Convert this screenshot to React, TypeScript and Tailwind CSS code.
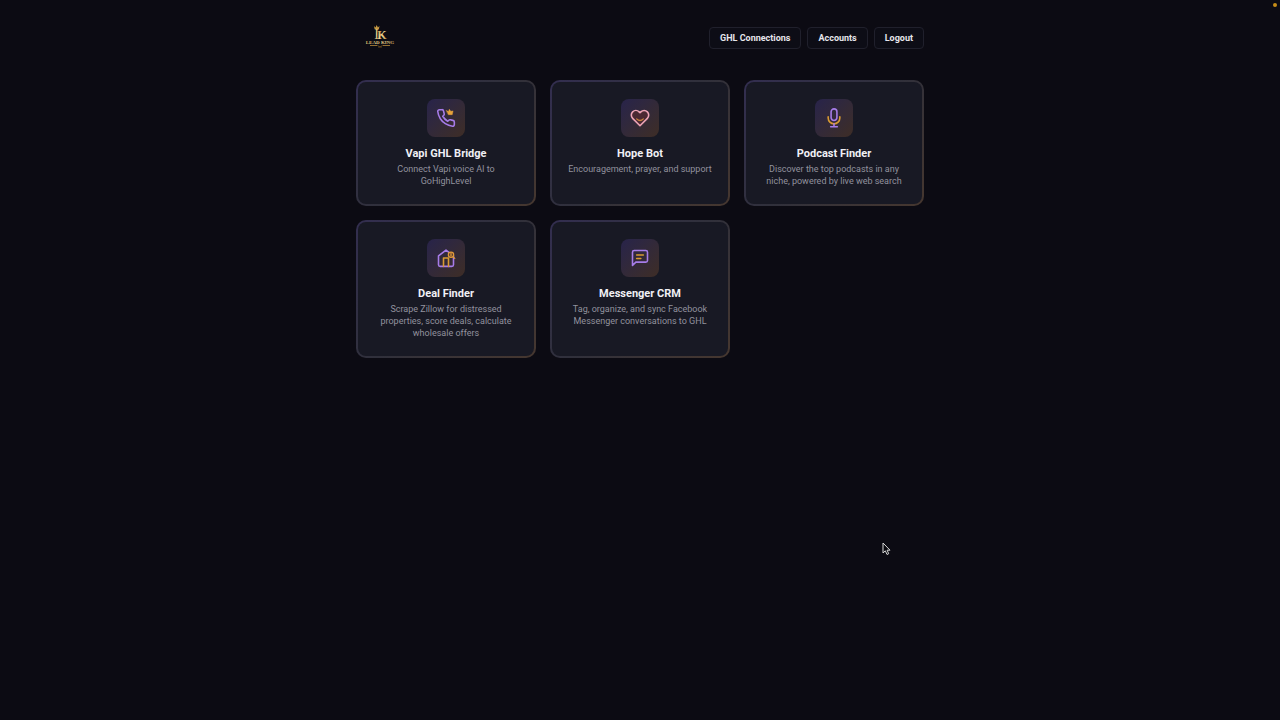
import type { ReactNode } from "react";

type Tool = { title: string; description: string; icon: ReactNode };

function Glyph({ children }: { children: ReactNode }) {
  return (
    <svg
      viewBox="0 0 24 24"
      className="size-5"
      fill="none"
      stroke="#a67ce8"
      strokeWidth="1.9"
      strokeLinecap="round"
      strokeLinejoin="round"
      aria-hidden="true"
    >
      {children}
    </svg>
  );
}

const tools: Tool[] = [
  {
    title: "Vapi GHL Bridge",
    description: "Connect Vapi voice AI to GoHighLevel",
    icon: (
      <Glyph>
        <path d="M22 16.92v3a2 2 0 0 1-2.18 2 19.79 19.79 0 0 1-8.63-3.07 19.5 19.5 0 0 1-6-6 19.79 19.79 0 0 1-3.07-8.67A2 2 0 0 1 4.11 2h3a2 2 0 0 1 2 1.72 12.84 12.84 0 0 0 .7 2.81 2 2 0 0 1-.45 2.11L8.09 9.91a16 16 0 0 0 6 6l1.27-1.27a2 2 0 0 1 2.11-.45 12.84 12.84 0 0 0 2.81.7A2 2 0 0 1 22 16.92z" />
        <path d="M12.5 3l2.500 1.200L16 1.500l1.800 2.500L20.500 3.500l-1 4.500h-4.500z" fill="#e8a33a" stroke="#e8a33a" strokeWidth="0.5" />
      </Glyph>
    ),
  },
  {
    title: "Hope Bot",
    description: "Encouragement, prayer, and support",
    icon: (
      <Glyph>
        <path
          d="M20.84 4.61a5.5 5.5 0 0 0-7.78 0L12 5.67l-1.06-1.06a5.5 5.5 0 0 0-7.78 7.78L12 21.23l8.84-8.84a5.5 5.5 0 0 0 0-7.78z"
          stroke="#eda3b5"
          fill="#4b2933"
        />
        <path d="M8 13q4 4 8 0" stroke="#c9833f" strokeWidth="1.5" />
      </Glyph>
    ),
  },
  {
    title: "Podcast Finder",
    description: "Discover the top podcasts in any niche, powered by live web search",
    icon: (
      <Glyph>
        <rect x="8.5" y="1" width="7" height="14" rx="3.5" />
        <path d="M5 10.500v1.500a7 7 0 0 0 14 0v-1.500" stroke="#d99a32" />
        <path d="M12 19v3.500M8 22.500h8" />
      </Glyph>
    ),
  },
  {
    title: "Deal Finder",
    description: "Scrape Zillow for distressed properties, score deals, calculate wholesale offers",
    icon: (
      <Glyph>
        <path d="M3 9.500L12 2.500l9 7V20a2 2 0 0 1-2 2H5a2 2 0 0 1-2-2z" />
        <path d="M9 22V12h6v10" stroke="#d99a32" />
        <circle cx="18" cy="8" r="3.200" stroke="#e09a3a" strokeWidth="1.5" fill="#56392f" />
        <path d="M18 6.500v3M20.500 10.500l2 2" stroke="#e09a3a" strokeWidth="1.5" />
      </Glyph>
    ),
  },
  {
    title: "Messenger CRM",
    description: "Tag, organize, and sync Facebook Messenger conversations to GHL",
    icon: (
      <Glyph>
        <path d="M21 15a2 2 0 0 1-2 2H7l-4 4V5a2 2 0 0 1 2-2h14a2 2 0 0 1 2 2z" />
        <path d="M8 8.500h8M8 12.500h5" stroke="#d99a32" />
      </Glyph>
    ),
  },
];

function Logo() {
  return (
    <svg viewBox="0 0 48 40" className="h-10 w-12" role="img" aria-label="Lead King">
      <defs>
        <linearGradient id="gold" x1="0" y1="0" x2="1" y2="1">
          <stop offset="0" stopColor="#b98b35" />
          <stop offset="0.5" stopColor="#efd794" />
          <stop offset="1" stopColor="#ab7d30" />
        </linearGradient>
      </defs>
      <path d="M18 8l1.500 1.500L20.700 7l1.200 2.500L23.500 8l-.6 3h-4.300z" fill="#c79a42" />
      <g fill="url(#gold)" fontFamily="Liberation Serif, serif" textAnchor="middle">
        <text x="20.500" y="20.500" fontSize="14">I</text>
        <text x="26" y="20.500" fontSize="12" fontWeight="bold">K</text>
        <text x="24" y="26" fontSize="5" fontWeight="bold">LEAD KING</text>
      </g>
      <path d="M14 27.500h7M27 27.500h7" stroke="#b58a3c" strokeWidth="0.800" />
      <path d="M21 27l3 2 3-2M22 29h4" stroke="#765520" strokeWidth="0.700" fill="none" />
    </svg>
  );
}

function ToolCard({ title, description, icon }: Tool) {
  return (
    <a
      href="#"
      className="flex rounded-[10px] bg-linear-135 from-[#332e50] via-[#30303b] to-[#46372f] p-[2px]"
    >
      <article className="flex w-full flex-col items-center rounded-lg bg-[#181924] px-3.5 py-[17px] text-center">
        <div className="flex size-[38px] items-center justify-center rounded-lg bg-linear-135 from-[#28234a] to-[#3e2d25]">
          {icon}
        </div>
        <h2 className="mt-2.5 text-[11px] leading-[14px] font-bold text-[#f0f0f5]">{title}</h2>
        <p className="mt-0.5 text-[9px] leading-3 text-[#92929e]">{description}</p>
      </article>
    </a>
  );
}

export default function App() {
  return (
    <div className="relative min-h-screen bg-[#0c0b13] font-[Roboto,sans-serif]">
      <span className="absolute top-[3px] right-[3px] size-1 rounded-full bg-[#c78d18]" />
      <div className="mx-auto w-full max-w-[568px] pt-[18px]">
        <header className="flex items-center justify-between">
          <Logo />
          <nav className="flex gap-1.5">
            {["GHL Connections", "Accounts", "Logout"].map((label) => (
              <button
                key={label}
                type="button"
                className="h-[22px] rounded border border-[#20202c] bg-[#0d0d16] px-2.5 text-[9px] leading-3 font-bold text-[#e6e6ec]"
              >
                {label}
              </button>
            ))}
          </nav>
        </header>
        <main className="mt-[22px] grid grid-cols-3 gap-3.5">
          {tools.map((tool) => (
            <ToolCard key={tool.title} {...tool} />
          ))}
        </main>
      </div>
      <svg viewBox="0 0 12 16" className="absolute top-[541px] left-[881px] h-4 w-3" aria-hidden="true">
        <path
          d="M2 2v10l2.300-2.200 1.700 3.700 1.700-.8-1.600-3.500H9z"
          fill="#08080d"
          stroke="#d8d8d8"
          strokeWidth="1"
          strokeLinejoin="round"
        />
      </svg>
    </div>
  );
}
